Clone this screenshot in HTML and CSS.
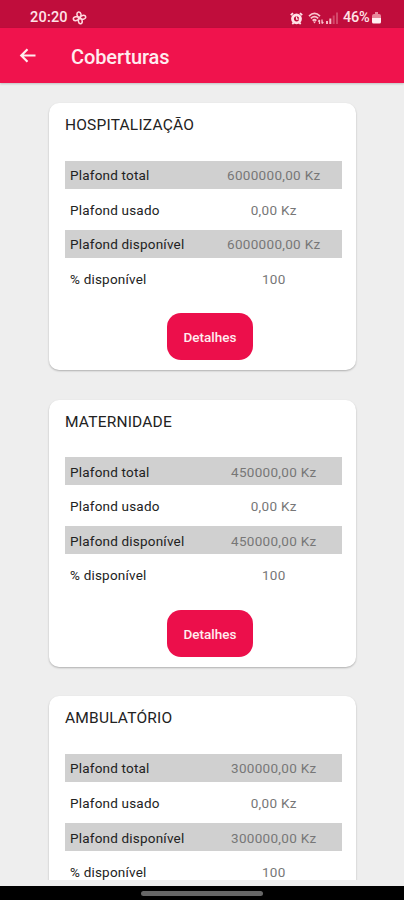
FILE: index.html
```
<!DOCTYPE html>
<html lang="pt">

<head>
    <meta charset="utf-8">
    <title>Coberturas</title>
    <meta name="viewport" content="width=device-width, initial-scale=1.0">
    <link rel="stylesheet" href="styles.css">
</head>

<body>
    <div class="status">
        <span class="time">20:20</span>
        <svg class="fan" width="15" height="14" viewBox="0 0 15 14" fill="none" stroke="#ffd9df" stroke-width="1.5">
            <ellipse cx="7" cy="3.6" rx="2" ry="2.6" transform="rotate(-12 7 3.6)"/>
            <ellipse cx="11" cy="6.3" rx="2.7" ry="1.9" transform="rotate(-12 11 6.3)"/>
            <ellipse cx="8.3" cy="10.1" rx="1.9" ry="2.6" transform="rotate(-12 8.3 10.1)"/>
            <ellipse cx="4" cy="7.7" rx="2.7" ry="1.9" transform="rotate(-12 4 7.7)"/>
        </svg>
        <svg class="alarm" width="13" height="13" viewBox="0 0 13 13" fill="none" stroke="#ffe3e8">
            <circle cx="6.5" cy="6.8" r="4" stroke-width="2.8"/>
            <path d="M6.5 4.5v2.6h2" stroke-width="1.1"/>
            <path d="M.8 3.2 3 1.2M12.2 3.2 10 1.2M2.3 12l1.6-1.6M10.7 12 9.1 10.4" stroke-width="1.8"/>
        </svg>
        <svg class="wifi" width="16" height="13" viewBox="0 0 16 13" fill="none" stroke="#f9c4ce" stroke-width="1.7">
            <path d="M1 4.200q5.500-5.500 11 0M2.800 6.400q3.700-3.400 7.400 0M4.600 8.600q1.900-1.700 3.800 0"/>
            <path d="M5 9.500h3l-1.500 2z" fill="#f9c4ce" stroke="none"/>
            <path d="M11.500 12V8M10.200 9.600l1.300-1.800M14 7.500v4M15.300 10 14 11.600" stroke-width="1.300"/>
        </svg>
        <svg class="signal" width="13" height="12" viewBox="0 0 13 12">
            <path d="M0 9h2v3H0zM3.300 6.500h2V12h-2z" fill="#f7b9c5"/>
            <path d="M6.700 3.500h2V12h-2zM10 .5h2V12h-2z" fill="#d3486a"/>
        </svg>
        <span class="battery">46%</span>
        <svg class="cell" width="9" height="12" viewBox="0 0 9 12">
            <path d="M3 0h3v2h1q2 0 2 2v2H0V4q0-2 2-2h1z" fill="#e9889c"/>
            <path d="M0 6h9v4q0 1.500-1.500 1.500h-6Q0 11.500 0 10z" fill="#fff0f2"/>
        </svg>
    </div>

    <header>
        <svg width="18" height="16" viewBox="0 0 18 16" fill="none" stroke="#ffecef" stroke-width="2.200">
            <path d="M16.500 7.500H2.500M8.500 1.300 2.300 7.500 8.500 13.700"/>
        </svg>
        <h1>Coberturas</h1>
    </header>

    <main>
        <section class="card">
            <h2>HOSPITALIZAÇÃO</h2>
            <dl>
                <div class="row"><dt>Plafond total</dt><dd>6000000,00 Kz</dd></div>
                <div class="row"><dt>Plafond usado</dt><dd>0,00 Kz</dd></div>
                <div class="row"><dt>Plafond disponível</dt><dd>6000000,00 Kz</dd></div>
                <div class="row"><dt>% disponível</dt><dd>100</dd></div>
            </dl>
            <button>Detalhes</button>
        </section>

        <section class="card">
            <h2>MATERNIDADE</h2>
            <dl>
                <div class="row"><dt>Plafond total</dt><dd>450000,00 Kz</dd></div>
                <div class="row"><dt>Plafond usado</dt><dd>0,00 Kz</dd></div>
                <div class="row"><dt>Plafond disponível</dt><dd>450000,00 Kz</dd></div>
                <div class="row"><dt>% disponível</dt><dd>100</dd></div>
            </dl>
            <button>Detalhes</button>
        </section>

        <section class="card">
            <h2>AMBULATÓRIO</h2>
            <dl>
                <div class="row"><dt>Plafond total</dt><dd>300000,00 Kz</dd></div>
                <div class="row"><dt>Plafond usado</dt><dd>0,00 Kz</dd></div>
                <div class="row"><dt>Plafond disponível</dt><dd>300000,00 Kz</dd></div>
                <div class="row"><dt>% disponível</dt><dd>100</dd></div>
            </dl>
        </section>
    </main>

    <div class="navbar"><span></span></div>
</body>

</html>
```
FILE: styles.css
```
* { box-sizing: border-box; margin: 0; padding: 0; }
body { display: flex; flex-direction: column; height: 900px; overflow: hidden; background: #eee; font-family: Roboto, sans-serif; }
svg { display: block; flex: none; }

.status { display: flex; align-items: center; flex: none; height: 28px; padding: 8px 23px 0 30px; background: #c00d3c; color: #ffe3e8; font-size: 14.5px; font-weight: 500; line-height: 20px; }
.time { width: 38px; letter-spacing: 0.2px; }
.fan { margin-left: 4px; }
.alarm { margin-left: auto; }
.wifi { margin-left: 5px; }
.signal { margin-left: 2px; }
.battery { margin-left: 4px; width: 28px; letter-spacing: -0.3px; }
.cell { margin-left: 1px; }

header { display: flex; align-items: center; flex: none; height: 55px; padding: 0 19px; background: #f0134d; box-shadow: 0 1px 2px #0003; }
header h1 { margin: 2px 0 0 34px; color: #ffecef; font-size: 20px; font-weight: 500; line-height: 28px; letter-spacing: -0.1px; }

main { display: flex; flex-direction: column; gap: 29.7px; flex: none; height: 797px; padding: 20px 48px 0 49px; overflow: hidden; }
.card { flex: none; height: 267px; padding: 10px 14.5px 0 16px; border-radius: 10px; background: #fff; box-shadow: 0 1px 2px #0004; }
.card h2 { height: 47.5px; color: #222; font-size: 15.5px; font-weight: 400; line-height: 24px; letter-spacing: 0.2px; }
dl { display: flex; flex-direction: column; gap: 6.6px; }
.row { display: flex; align-items: center; height: 28px; padding: 1px 0 0 5px; font-size: 13.5px; letter-spacing: 0.2px; }
.row:nth-child(odd) { background: #d0d0d0; }
dt { width: 136px; color: #222; }
dd { flex: 1; color: #777; text-align: center; letter-spacing: 0.3px; }
button { display: block; width: 86px; height: 47px; margin: 20.7px auto 0 102px; padding-top: 2px; border: 0; border-radius: 14px; background: #ec0f4b; color: #ffecef; font: 500 13.5px Roboto, sans-serif; }

.navbar { display: flex; justify-content: center; flex: none; height: 14px; margin-top: 6px; padding-top: 5px; background: #000; }
.navbar span { width: 122px; height: 4.5px; border-radius: 3px; background: #666; }
```
